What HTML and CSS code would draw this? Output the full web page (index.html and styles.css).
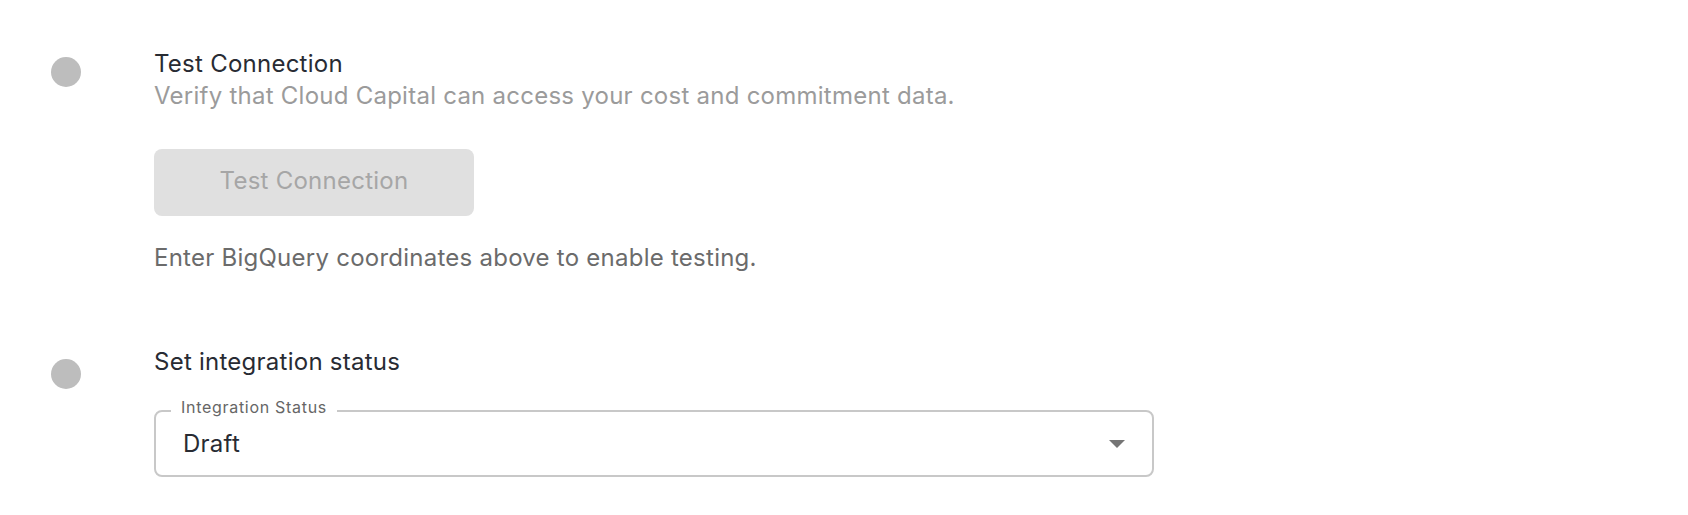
FILE: index.html
```html
<!DOCTYPE html>
<html lang="en">
<head>
<meta charset="utf-8">
<title>Integration steps</title>
<link rel="stylesheet" href="styles.css">
</head>
<body>
<main class="stepper">
  <section class="step step-first">
    <div class="step-icon icon-first"></div>
    <div class="step-body">
      <h2 class="step-title">Test Connection</h2>
      <p class="step-desc">Verify that Cloud Capital can access your cost and commitment data.</p>
      <button class="btn-test" disabled>Test Connection</button>
      <p class="helper">Enter BigQuery coordinates above to enable testing.</p>
    </div>
  </section>
  <section class="step step-second">
    <div class="step-icon icon-second"></div>
    <div class="step-body">
      <h2 class="step-title">Set integration status</h2>
      <div class="select">
        <span class="select-label">Integration Status</span>
        <span class="select-value">Draft</span>
        <svg class="select-arrow" width="16" height="8" viewBox="0 0 16 8"><path d="M0 0 L16 0 L8 8 Z" fill="#757575"/></svg>
      </div>
    </div>
  </section>
</main>
</body>
</html>
```

FILE: styles.css
```css
* { box-sizing: border-box; }
html, body { margin: 0; padding: 0; background: #fff; }
body {
  font-family: "Inter", "Noto Sans", sans-serif;
  font-size: 24px;
  line-height: 32px;
  letter-spacing: 0.25px;
  color: #282b33;
}
.stepper {
  padding: 48px 0 0 51px;
}
.step {
  display: grid;
  grid-template-columns: 30px 1fr;
  column-gap: 73px;
  align-items: start;
}
.step-second { margin-top: 72px; }
.step-icon {
  width: 30px;
  height: 30px;
  border-radius: 50%;
  background: #bdbdbd;
}
.icon-first { margin-top: 9px; }
.icon-second { margin-top: 13px; }
.step-title {
  margin: 0;
  font-size: 24px;
  font-weight: 400;
  line-height: 32px;
  color: #282b33;
}
.step-desc {
  margin: 0;
  color: #9b9b9b;
}
.btn-test {
  display: block;
  margin-top: 37px;
  width: 320px;
  height: 67px;
  padding: 16px 0 19px;
  border: none;
  border-radius: 8px;
  background: #e0e0e0;
  color: #a6a6a6;
  font-family: inherit;
  font-size: 24px;
  line-height: 32px;
  letter-spacing: 0.25px;
}
.helper {
  margin: 26px 0 0;
  color: #6b6b6b;
}
.select {
  position: relative;
  margin-top: 32px;
  width: 1000px;
  height: 67px;
  border: 2px solid #c8c8c8;
  border-radius: 8px;
  display: flex;
  align-items: center;
  justify-content: space-between;
  padding: 0 27px 0 27px;
}
.select-label {
  position: absolute;
  top: -15px;
  left: 15px;
  padding: 0 10px;
  background: #fff;
  font-size: 16px;
  line-height: 20px;
  letter-spacing: 0.7px;
  color: #666;
}
.select-value { color: #282b33; }
.select-arrow { display: block; }
```
